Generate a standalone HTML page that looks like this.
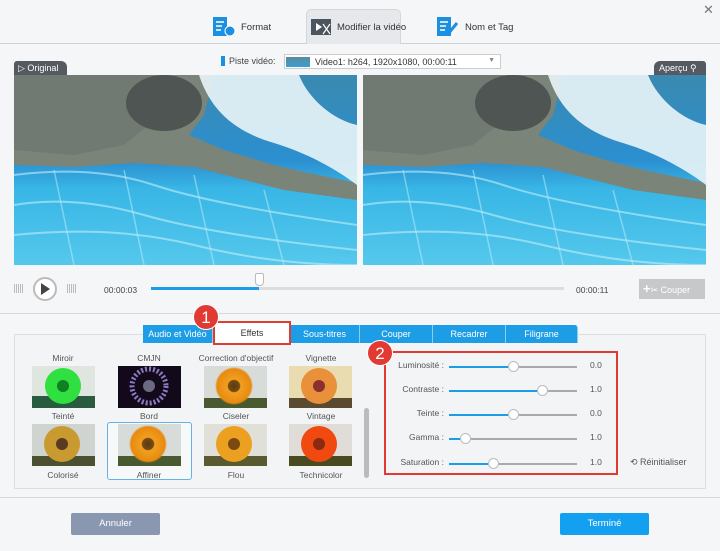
<!DOCTYPE html>
<html><head><meta charset="utf-8"><style>
*{box-sizing:border-box;margin:0;padding:0}
body{width:720px;height:551px;background:#f5f6f8;font-family:"Liberation Sans",sans-serif;font-size:9px;color:#444;position:relative;overflow:hidden}
.a{position:absolute}
.tab{position:absolute;top:10px;height:34px;display:flex;align-items:center;gap:5px;font-size:9.5px;color:#333}
.btab{position:absolute;top:325px;height:18px;background:#1c9de6;color:#fff;font-size:9px;text-align:center;line-height:18px;border-right:1px solid #8ccdf2}
.lbl{position:absolute;width:90px;text-align:center;font-size:8.5px;color:#555}
.th{position:absolute;width:63px;height:42px}
.sl{position:absolute;left:384px;width:230px;height:14px}
.sl .n{position:absolute;right:170px;top:0;font-size:8.5px;color:#555;white-space:nowrap}
.sl .t{position:absolute;left:65px;top:6px;width:128px;height:2px;background:#aaa}
.sl .f{position:absolute;left:65px;top:6px;height:2px;background:#1c9de6}
.sl .k{position:absolute;top:1px;width:11px;height:11px;border-radius:50%;background:#fff;border:1px solid #bbb}
.sl .v{position:absolute;left:206px;top:0;font-size:8.5px;color:#555}
.badge{position:absolute;width:26px;height:26px;border-radius:50%;background:#e03a32;color:#fff;font-size:17px;text-align:center;line-height:26px;border:1px solid #fff}
</style></head><body>
<svg width="0" height="0" style="position:absolute"><defs>
<linearGradient id="wat" x1="0" y1="0" x2="0" y2="1"><stop offset="0" stop-color="#3a8ab0"/><stop offset=".45" stop-color="#2c8fd0"/><stop offset=".6" stop-color="#38b6e6"/><stop offset="1" stop-color="#55c8ec"/></linearGradient>
<radialGradient id="sf"><stop offset="0" stop-color="#5a3a10"/><stop offset=".3" stop-color="#7a4a10"/><stop offset=".35" stop-color="#f0a020"/><stop offset=".9" stop-color="#e88a10"/><stop offset="1" stop-color="#e88a10" stop-opacity="0"/></radialGradient>
<g id="vid">
<rect width="343" height="190" fill="url(#wat)"/>
<path d="M0 0H200L190 40 175 60 210 75 260 90 290 97 343 108 343 125 270 115 180 92 120 88 60 92 0 90Z" fill="#7a8478"/>
<path d="M0 0H140L135 50 110 70 60 80 0 75Z" fill="#6e7870" opacity=".8"/>
<ellipse cx="150" cy="28" rx="38" ry="28" fill="#4e5552"/>
<path d="M185 0C195 30 215 55 260 68 300 80 330 100 343 110V50C320 45 295 25 285 0Z" fill="#eaf5f8" opacity=".9"/>
<path d="M0 100Q80 90 140 110T343 150" stroke="#bfeefa" stroke-width="2" fill="none" opacity=".6"/>
<path d="M0 130Q60 120 130 140T343 175" stroke="#bfeefa" stroke-width="2" fill="none" opacity=".6"/>
<path d="M0 160Q100 150 180 170T343 190" stroke="#bfeefa" stroke-width="2" fill="none" opacity=".6"/>
<path d="M40 95L60 190M110 95L130 190M180 100L200 190M250 115L270 190" stroke="#bfeefa" stroke-width="1.5" opacity=".5"/>
</g>
<g id="flw"><rect width="63" height="42" fill="#d8dcd8"/><rect y="32" width="63" height="10" fill="#4a5a30"/><circle cx="30" cy="20" r="19" fill="url(#sf)"/></g>
</defs></svg>

<div class="a" style="left:0;top:43px;width:720px;height:1px;background:#cfd2d6"></div>
<div class="a" style="left:306px;top:9px;width:95px;height:35px;background:#e6e8eb;border:1px solid #d3d6da;border-bottom:none;border-radius:5px 5px 0 0"></div>
<div class="tab" style="left:212px"><svg width="24" height="22"><rect x="1" y="1" width="14" height="19" fill="#1c8fe0"/><path d="M4 6h8M4 10h6M4 14h5" stroke="#fff" stroke-width="1.5"/><circle cx="18" cy="15" r="5" fill="#1c8fe0" stroke="#fff"/></svg>Format</div>
<div class="tab" style="left:310px"><svg width="22" height="22"><rect x="1" y="3" width="20" height="16" fill="#4a5560"/><path d="M6 7l6 4-6 4z" fill="#fff"/><path d="M13 8l7 10M20 8l-7 10" stroke="#fff" stroke-width="1.2"/></svg>Modifier la vidéo</div>
<div class="tab" style="left:436px"><svg width="24" height="22"><rect x="1" y="1" width="14" height="19" fill="#1c8fe0"/><path d="M4 6h8M4 10h6M4 14h5" stroke="#fff" stroke-width="1.5"/><path d="M12 18l9-11" stroke="#1c8fe0" stroke-width="3"/></svg>Nom et Tag</div>
<div class="a" style="left:703px;top:2px;font-size:13px;color:#777">✕</div>

<div class="a" style="left:221px;top:56px;width:4px;height:10px;background:#1c8fe0"></div>
<div class="a" style="left:229px;top:56px;font-size:9px">Piste vidéo:</div>
<div class="a" style="left:284px;top:54px;width:217px;height:15px;background:#fff;border:1px solid #ccc"><div class="a" style="left:1px;top:2px;width:24px;height:10px;background:linear-gradient(#5a8aa0,#3aa0d0)"></div><div class="a" style="left:30px;top:2px;font-size:9px;color:#333">Video1: h264, 1920x1080, 00:00:11</div><div class="a" style="right:5px;top:2px;font-size:7px;color:#888">▼</div></div>

<svg class="a" style="left:14px;top:75px" width="343" height="190"><use href="#vid"/></svg>
<svg class="a" style="left:363px;top:75px" width="343" height="190"><use href="#vid"/></svg>
<div class="a" style="left:14px;top:61px;width:53px;height:14px;background:#555a60;color:#fff;font-size:9px;line-height:14px;padding-left:4px;border-radius:3px 6px 0 0">▷ Original</div>
<div class="a" style="left:654px;top:61px;width:52px;height:14px;background:#555a60;color:#fff;font-size:9px;line-height:14px;padding-left:5px;border-radius:6px 3px 0 0">Aperçu ⚲</div>

<div class="a" style="left:14px;top:284px;width:9px;height:9px;background:repeating-linear-gradient(90deg,#bbb 0 1px,transparent 1px 2px)"></div>
<div class="a" style="left:33px;top:277px;width:24px;height:24px;border-radius:50%;border:2px solid #bbb;background:#fff"></div>
<div class="a" style="left:41px;top:283px;width:0;height:0;border-left:9px solid #444;border-top:6px solid transparent;border-bottom:6px solid transparent"></div>
<div class="a" style="left:67px;top:284px;width:9px;height:9px;background:repeating-linear-gradient(90deg,#bbb 0 1px,transparent 1px 2px)"></div>
<div class="a" style="left:104px;top:285px;font-size:8.5px">00:00:03</div>
<div class="a" style="left:151px;top:287px;width:413px;height:3px;background:#ddd"></div>
<div class="a" style="left:151px;top:287px;width:108px;height:3px;background:#1c9de6"></div>
<div class="a" style="left:255px;top:273px;width:9px;height:13px;background:#fff;border:1px solid #bbb;border-radius:2px 2px 4px 4px"></div>
<div class="a" style="left:576px;top:285px;font-size:8.5px">00:00:11</div>
<div class="a" style="left:639px;top:279px;width:66px;height:20px;background:#c6c8ca;color:#fff;font-size:9px;line-height:20px;padding-left:4px"><b style="font-size:13px">+</b>✂ Couper</div>

<div class="a" style="left:0;top:313px;width:720px;height:1px;background:#d6d8db"></div>

<div class="a" style="left:14px;top:334px;width:692px;height:155px;border:1px solid #dcdee1;background:#f3f4f6"></div>
<div class="btab" style="left:143px;width:70px">Audio et Vidéo</div>
<div class="btab" style="left:290px;width:70px">Sous-titres</div>
<div class="btab" style="left:360px;width:73px">Couper</div>
<div class="btab" style="left:433px;width:73px">Recadrer</div>
<div class="btab" style="left:506px;width:72px;border-radius:0 3px 0 0">Filigrane</div>
<div class="a" style="left:213px;top:321px;width:78px;height:24px;background:#fff;border:2px solid #e03a32;text-align:center;line-height:20px;font-size:9px;color:#333">Effets</div>

<div class="lbl" style="left:18px;top:353px">Miroir</div><div class="lbl" style="left:104px;top:353px">CMJN</div><div class="lbl" style="left:191px;top:353px">Correction d'objectif</div><div class="lbl" style="left:276px;top:353px">Vignette</div>
<svg class="th" style="left:32px;top:366px"><rect width="63" height="42" fill="#dfe6e0"/><rect y="30" width="63" height="12" fill="#2a5a40"/><circle cx="31" cy="20" r="18" fill="#30e040"/><circle cx="31" cy="20" r="6" fill="#108020"/></svg>
<svg class="th" style="left:118px;top:366px"><rect width="63" height="42" fill="#120a1a"/><circle cx="31" cy="20" r="17" fill="none" stroke="#8a7ac0" stroke-width="5" stroke-dasharray="2 2"/><circle cx="31" cy="20" r="6" fill="#6a6a80"/></svg>
<svg class="th" style="left:204px;top:366px"><use href="#flw"/></svg>
<svg class="th" style="left:289px;top:366px"><rect width="63" height="42" fill="#e8dcb0"/><rect y="32" width="63" height="10" fill="#5a4a30"/><circle cx="30" cy="20" r="18" fill="#e8903a"/><circle cx="30" cy="20" r="6" fill="#8a3030"/></svg>
<div class="lbl" style="left:18px;top:411px">Teinté</div><div class="lbl" style="left:104px;top:411px">Bord</div><div class="lbl" style="left:191px;top:411px">Ciseler</div><div class="lbl" style="left:276px;top:411px">Vintage</div>
<div class="a" style="left:107px;top:422px;width:85px;height:58px;border:1px solid #6ab0e0;border-radius:3px;background:#f6f8fa"></div>
<svg class="th" style="left:32px;top:424px"><rect width="63" height="42" fill="#cfd4d0"/><rect y="32" width="63" height="10" fill="#4a5030"/><circle cx="30" cy="20" r="18" fill="#c89a30"/><circle cx="30" cy="20" r="6" fill="#5a3a20"/></svg>
<svg class="th" style="left:118px;top:424px"><use href="#flw"/></svg>
<svg class="th" style="left:204px;top:424px"><rect width="63" height="42" fill="#e0e0d8"/><rect y="32" width="63" height="10" fill="#5a5a30"/><circle cx="30" cy="20" r="18" fill="#eca020"/><circle cx="30" cy="20" r="6" fill="#7a4a10"/></svg>
<svg class="th" style="left:289px;top:424px"><rect width="63" height="42" fill="#e0dcd8"/><rect y="32" width="63" height="10" fill="#4a4a20"/><circle cx="30" cy="20" r="18" fill="#f04a10"/><circle cx="30" cy="20" r="6" fill="#8a2a10"/></svg>
<div class="lbl" style="left:18px;top:470px">Colorisé</div><div class="lbl" style="left:104px;top:470px">Affiner</div><div class="lbl" style="left:191px;top:470px">Flou</div><div class="lbl" style="left:276px;top:470px">Technicolor</div>
<div class="a" style="left:364px;top:408px;width:5px;height:70px;background:#bbb;border-radius:3px"></div>

<div class="a" style="left:384px;top:351px;width:234px;height:124px;border:2px solid #e03a32"></div>
<div class="sl" style="top:360px"><span class="n">Luminosité :</span><div class="t"></div><div class="f" style="width:64px"></div><div class="k" style="left:124px"></div><span class="v">0.0</span></div>
<div class="sl" style="top:384px"><span class="n">Contraste :</span><div class="t"></div><div class="f" style="width:93px"></div><div class="k" style="left:153px"></div><span class="v">1.0</span></div>
<div class="sl" style="top:408px"><span class="n">Teinte :</span><div class="t"></div><div class="f" style="width:64px"></div><div class="k" style="left:124px"></div><span class="v">0.0</span></div>
<div class="sl" style="top:432px"><span class="n">Gamma :</span><div class="t"></div><div class="f" style="width:16px"></div><div class="k" style="left:76px"></div><span class="v">1.0</span></div>
<div class="sl" style="top:457px"><span class="n">Saturation :</span><div class="t"></div><div class="f" style="width:44px"></div><div class="k" style="left:104px"></div><span class="v">1.0</span></div>
<div class="a" style="left:630px;top:457px;font-size:9px;color:#555">⟲ Réinitialiser</div>

<div class="badge" style="left:193px;top:304px">1</div>
<div class="badge" style="left:367px;top:340px">2</div>

<div class="a" style="left:0;top:497px;width:720px;height:1px;background:#d6d8db"></div>
<div class="a" style="left:71px;top:513px;width:89px;height:22px;background:#8a97b0;color:#fff;border-radius:2px;text-align:center;line-height:22px;font-size:9.5px">Annuler</div>
<div class="a" style="left:560px;top:513px;width:89px;height:22px;background:#14a0f0;color:#fff;border-radius:2px;text-align:center;line-height:22px;font-size:9.5px">Terminé</div>
</body></html>
